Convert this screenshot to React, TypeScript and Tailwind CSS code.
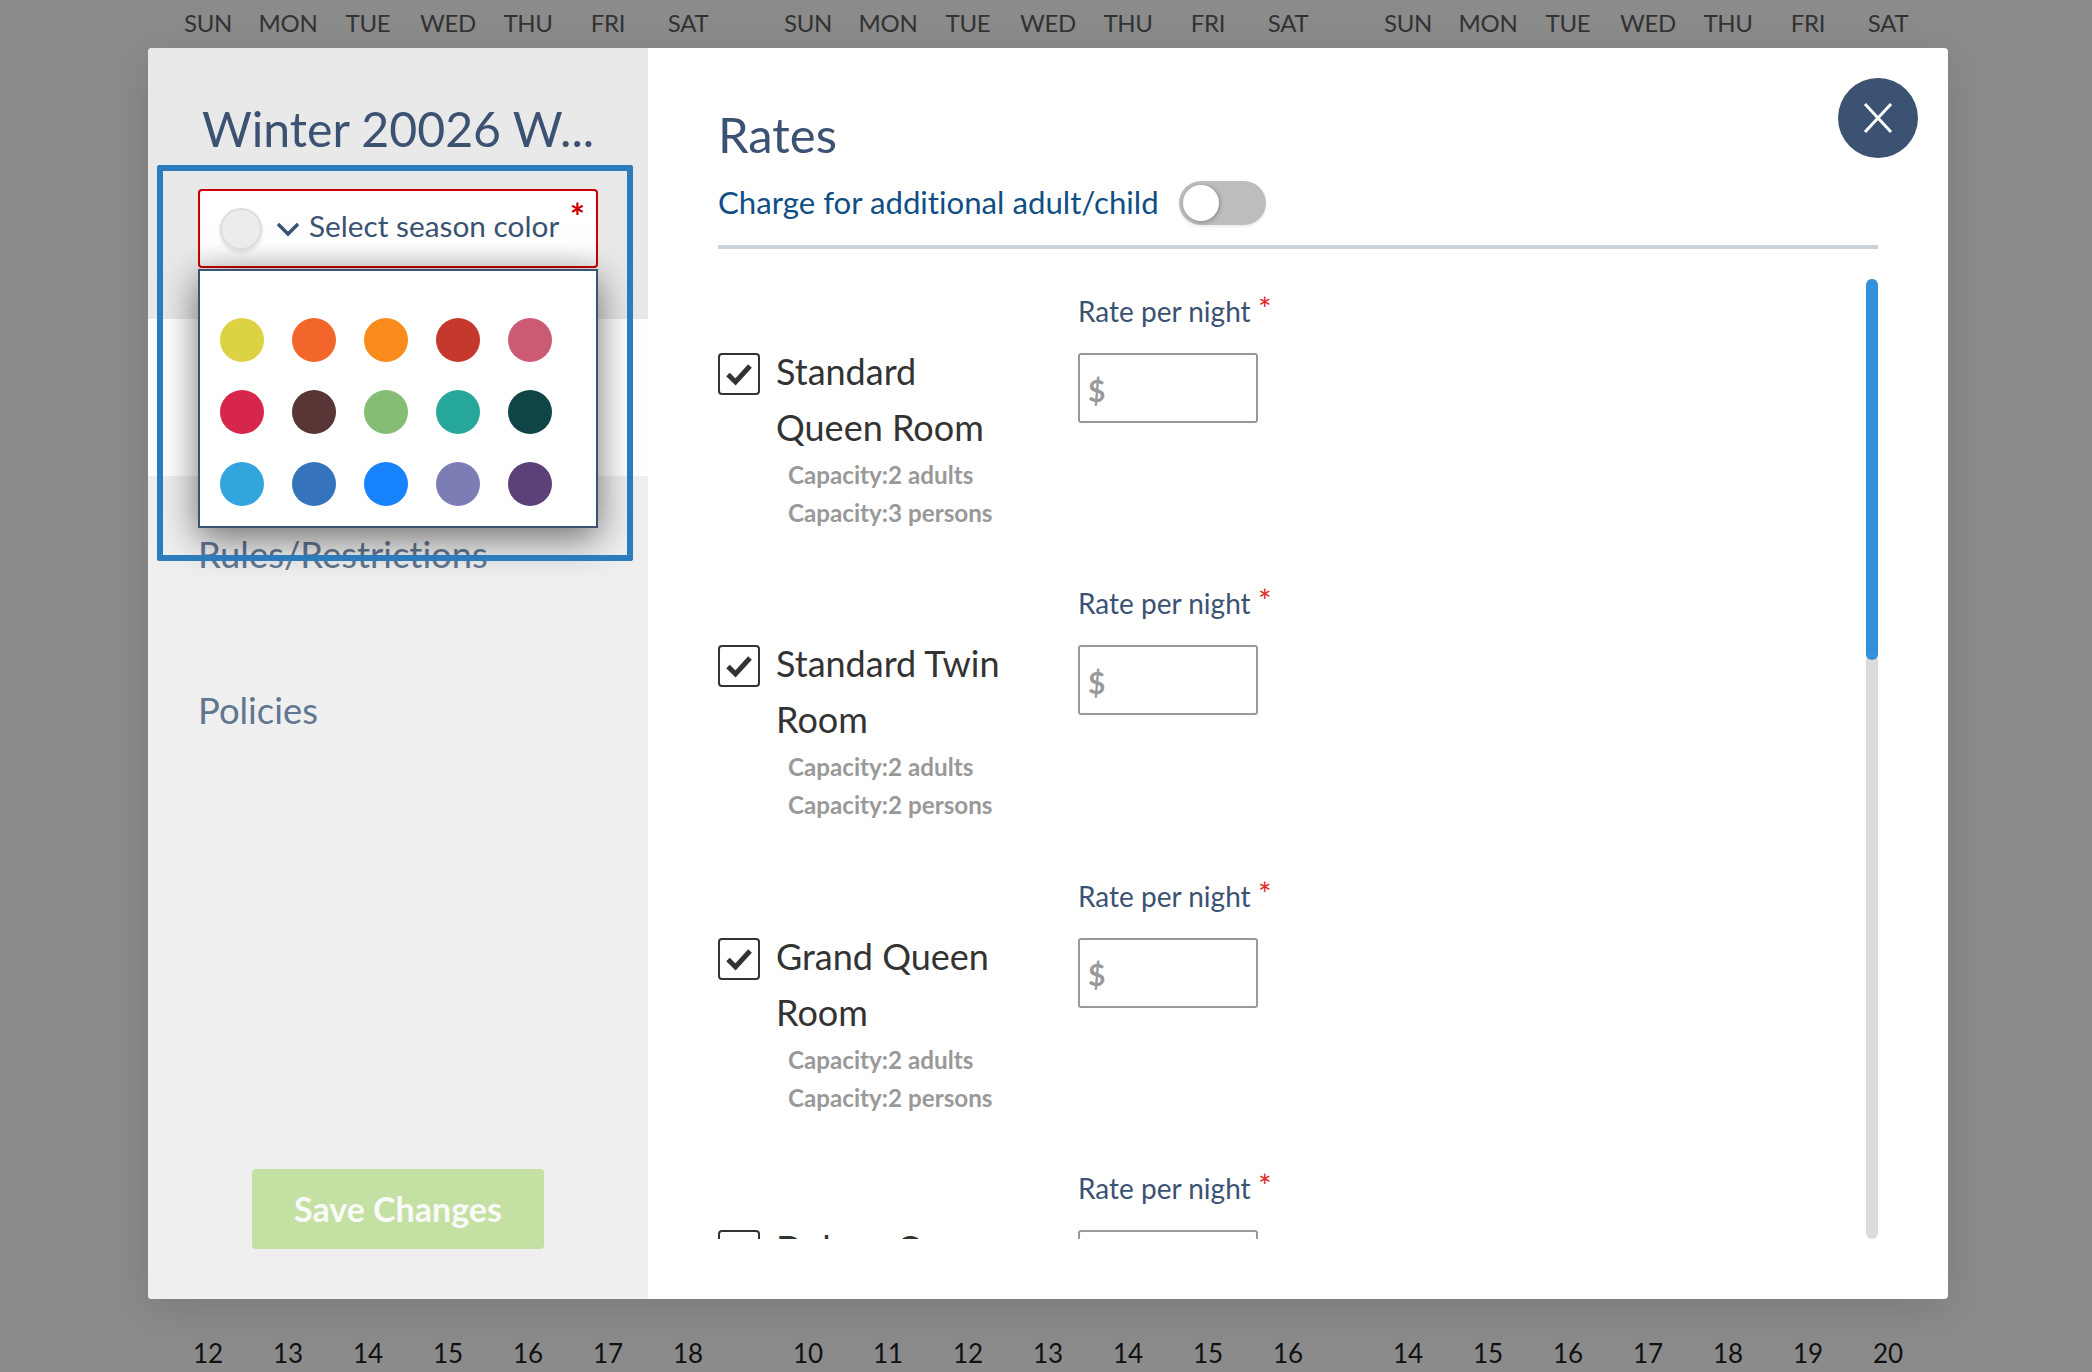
import React from 'react';

const DAYS = ['SUN', 'MON', 'TUE', 'WED', 'THU', 'FRI', 'SAT'];
const DATES = [
  ['12', '13', '14', '15', '16', '17', '18'],
  ['10', '11', '12', '13', '14', '15', '16'],
  ['14', '15', '16', '17', '18', '19', '20'],
];

const SWATCHES = [
  ['bg-[#dbd344]', 'bg-[#f2652b]', 'bg-[#f98a1c]', 'bg-[#c4382d]', 'bg-[#cb5a73]'],
  ['bg-[#d6264c]', 'bg-[#593535]', 'bg-[#86bd75]', 'bg-[#25a899]', 'bg-[#0f4547]'],
  ['bg-[#33a5de]', 'bg-[#3574bc]', 'bg-[#1783fe]', 'bg-[#7d7db5]', 'bg-[#5c4078]'],
];

const ROOMS = [
  { name: 'Standard Queen Room', adults: 2, persons: 3 },
  { name: 'Standard Twin Room', adults: 2, persons: 2 },
  { name: 'Grand Queen Room', adults: 2, persons: 2 },
  { name: 'Deluxe Queen Room', adults: 2, persons: 2 },
];

// Calendar strip behind the modal, three months side by side
const CalendarRow = ({ rows, className }: { rows: string[][]; className: string }) => (
  <div className={`flex gap-10 pl-[168px] ${className}`}>
    {rows.map((cells, i) => (
      <div key={i} className="flex w-[560px]">
        {cells.map((c) => (
          <div key={c} className="w-20 text-center">{c}</div>
        ))}
      </div>
    ))}
  </div>
);

const RoomRow = ({ room }: { room: (typeof ROOMS)[number] }) => (
  <div className="flex h-[292.3px] shrink-0">
    <div className="flex w-[360px] pt-[64px]">
      <div className="mt-[10px] flex size-[42px] shrink-0 items-center justify-center rounded-[4px] border-2 border-[#333333]">
        <svg width="28" height="24" viewBox="0 0 28 24" fill="none">
          <path d="M3 12.5L10.5 20L25 4" stroke="#333333" strokeWidth="5" />
        </svg>
      </div>
      <div className="ml-4 w-[240px]">
        <div className="text-[36px] leading-[56px] text-[#333333]">{room.name}</div>
        <div className="mt-px pl-3 text-[24.2px] font-bold leading-[38px] text-[#999999]">
          <div>Capacity:{room.adults} adults</div>
          <div>Capacity:{room.persons} persons</div>
        </div>
      </div>
    </div>
    <div className="pt-3">
      <div className="relative h-10 text-[28px] leading-10 text-[#3b5272]">
        Rate per night
        <span className="absolute left-[180px] top-[-2px] text-[32px] leading-10 text-[#e0291f]">*</span>
      </div>
      <div className="mt-[22px] flex h-[70px] w-[180px] items-center rounded-[3px] border-2 border-[#999999] pl-2 pt-1 text-[30px] font-bold text-[#999999]">
        $
      </div>
    </div>
  </div>
);

const App = () => {
  return (
    <div className="flex h-[1372px] w-[2092px] flex-col overflow-hidden bg-[#8b8b8b] font-['Lato',sans-serif] [font-variant-ligatures:none]">
      <CalendarRow rows={[DAYS, DAYS, DAYS]} className="h-12 shrink-0 text-[24px] leading-[46px] tracking-[-0.3px] text-[#333333]" />

      {/* Modal */}
      <div className="relative ml-[148px] flex h-[1251px] w-[1800px] shrink-0 overflow-hidden rounded-[4px] bg-white shadow-[0_10px_40px_rgba(0,0,0,0.12)]">
        {/* Sidebar */}
        <div className="relative flex w-[500px] shrink-0 flex-col">
          <div className="h-[271px] shrink-0 bg-[#e9e9e9] pl-[54px] pt-[52px]">
            <div className="text-[48.2px] leading-[56px] text-[#3b5272]">Winter 20026 W...</div>
          </div>
          <div className="h-[157px] shrink-0 bg-white" />
          <div className="flex flex-1 flex-col bg-[#efefef] pl-[50px] text-[36.4px] leading-[48px] text-[#617690]">
            <div className="mt-[54px]">Rules/Restrictions</div>
            <div className="mt-[108px]">Policies</div>
            <div className="mb-[50px] ml-[54px] mt-auto flex h-20 w-[292px] items-center justify-center rounded-[4px] bg-[#c5e0a3] text-[34px] font-bold text-[#fafafa]">
              Save Changes
            </div>
          </div>

          {/* Season colour select with its open menu */}
          <div className="absolute left-[50px] top-[141px] w-[400px]">
            <div className="flex h-[79px] items-center rounded-[4px] border-2 border-[#cc0000] bg-gradient-to-b from-white from-70% to-[#f0f0f0] pl-[20px]">
              <div className="size-[42px] shrink-0 rounded-full border-2 border-[#dddddd] bg-[#ececec] shadow-[0_2px_4px_rgba(0,0,0,0.12)]" />
              <svg className="ml-[14px] shrink-0" width="24" height="16" viewBox="0 0 24 16" fill="none">
                <path d="M2 3L12 13L22 3" stroke="#3b5272" strokeWidth="3.5" />
              </svg>
              <span className="-mt-1.5 ml-[9px] text-[29.8px] leading-[40px] text-[#3b5272]">Select season color</span>
              <span className="absolute right-[13px] top-[11px] text-[36px] font-bold leading-8 text-[#cc0000]">*</span>
            </div>
            <div className="mt-px flex h-[259px] w-[400px] flex-col gap-7 border-2 border-[#3b5272] bg-white pl-5 pt-[47px] shadow-[0_10px_36px_rgba(0,0,0,0.55)]">
              {SWATCHES.map((row, i) => (
                <div key={i} className="flex gap-7">
                  {row.map((color) => (
                    <div key={color} className={`h-11 w-11 rounded-full ${color}`} />
                  ))}
                </div>
              ))}
            </div>
          </div>

          {/* Blue highlight frame drawn over the select */}
          <div className="pointer-events-none absolute left-[9px] top-[117px] h-[396px] w-[476px] rounded-[2px] border-[6px] border-[#2b7bbd]" />
        </div>

        {/* Rates panel */}
        <div className="flex min-w-0 flex-1 flex-col pl-[70px] pt-[58px]">
          <div className="text-[49px] leading-[56px] text-[#3b5272]">Rates</div>
          <div className="mt-[19px] flex h-11 items-center">
            <span className="-mt-0.5 text-[31.2px] leading-10 text-[#0f4f85]">Charge for additional adult/child</span>
            <div className="ml-5 flex h-11 w-[87px] items-center rounded-full bg-[#bdbdbd] pl-1 shadow-[0_2px_3px_rgba(0,0,0,0.08)]">
              <div className="size-9 rounded-full bg-white shadow-[1px_1px_4px_rgba(0,0,0,0.3)]" />
            </div>
          </div>
          <div className="mt-5 h-1 w-[1160px] bg-[#ccd1da]" />
          <div className="relative mt-[30px] flex h-[960px] w-[1160px] flex-col overflow-hidden">
            {ROOMS.map((room) => (
              <RoomRow key={room.name} room={room} />
            ))}
            {/* Scrollbar */}
            <div className="absolute right-0 top-0 h-full w-3 rounded-full bg-[#dcdcdc]">
              <div className="h-[381px] w-3 rounded-full bg-[#3391da]" />
            </div>
          </div>
        </div>

        {/* Close */}
        <div className="absolute right-[30px] top-[30px] flex size-20 items-center justify-center rounded-full bg-[#3b5272]">
          <svg width="30" height="32" viewBox="0 0 30 32" fill="none">
            <path d="M2 2L28 30M28 2L2 30" stroke="white" strokeWidth="3" />
          </svg>
        </div>
      </div>

      <CalendarRow rows={DATES} className="flex-1 pt-[38px] text-[26px] leading-8 text-[#111111]" />
    </div>
  );
};

export default App;
